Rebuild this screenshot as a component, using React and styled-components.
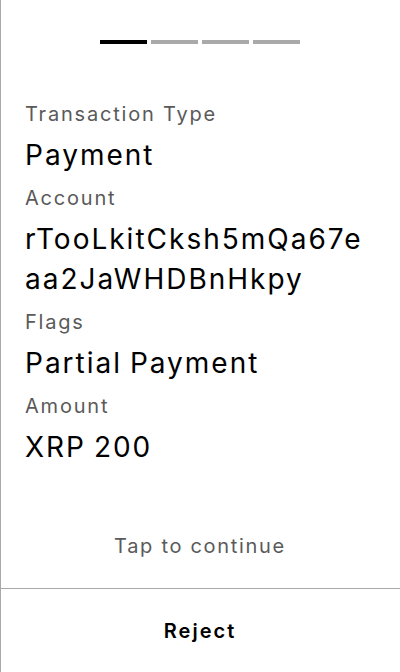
import React from 'react';
import styled, { createGlobalStyle } from 'styled-components';

const GlobalStyle = createGlobalStyle`
  * {
    box-sizing: border-box;
  }
  body {
    margin: 0;
    background: #fff;
    font-family: Inter, 'Noto Sans', sans-serif;
    -webkit-font-smoothing: antialiased;
  }
`;

const StyledScreen = styled.div`
  width: 400px;
  height: 672px;
  display: flex;
  flex-direction: column;
  box-shadow: inset 1px 0 0 #a9a9a9;
  background: #fff;
  color: #000;
`;

const StyledBody = styled.section`
  flex: 1;
  display: flex;
  flex-direction: column;
  padding-top: 40px;
`;

const StyledStepper = styled.div`
  display: grid;
  grid-template-columns: repeat(4, 1fr);
  gap: 4px;
  width: 200px;
  margin: 0 auto;
`;

const StyledStep = styled.span`
  height: 4px;
  background: ${({ active }) => (active ? '#000' : '#a9a9a9')};
`;

const StyledFields = styled.dl`
  margin: 56px 0 0;
  padding: 0 25px;
  display: flex;
  flex-direction: column;
  gap: 9px;
`;

const StyledLabel = styled.dt`
  font-size: 20px;
  line-height: 28px;
  letter-spacing: 1.8px;
  color: #5a5a5a;
  margin-bottom: 7px;
`;

const StyledValue = styled.dd`
  margin: 0;
  font-size: 28px;
  line-height: 40px;
  letter-spacing: 2px;
  word-spacing: -2px;
  color: #000;
  word-break: break-all;
`;

const StyledHint = styled.p`
  margin: auto 0 28px;
  text-align: center;
  font-size: 20px;
  line-height: 28px;
  letter-spacing: 1.7px;
  color: #5a5a5a;
`;

const StyledFooter = styled.button`
  height: 84px;
  border: 0;
  border-top: 1px solid #a9a9a9;
  background: transparent;
  font-family: inherit;
  font-size: 20px;
  font-weight: 600;
  letter-spacing: 2px;
  color: #000;
  padding: 0;
`;

const fields = [
  { label: 'Transaction Type', value: 'Payment' },
  { label: 'Account', value: 'rTooLkitCksh5mQa67eaa2JaWHDBnHkpy' },
  { label: 'Flags', value: 'Partial Payment' },
  { label: 'Amount', value: 'XRP 200' },
];

const App = () => (
  <>
    <GlobalStyle />
    <StyledScreen>
      <StyledBody>
        <StyledStepper>
          {[0, 1, 2, 3].map(i => (
            <StyledStep key={i} active={i === 0} />
          ))}
        </StyledStepper>
        <StyledFields>
          {fields.map(({ label, value }) => (
            <div key={label}>
              <StyledLabel>{label}</StyledLabel>
              <StyledValue>{value}</StyledValue>
            </div>
          ))}
        </StyledFields>
        <StyledHint>Tap to continue</StyledHint>
      </StyledBody>
      <StyledFooter>Reject</StyledFooter>
    </StyledScreen>
  </>
);

export default App;
